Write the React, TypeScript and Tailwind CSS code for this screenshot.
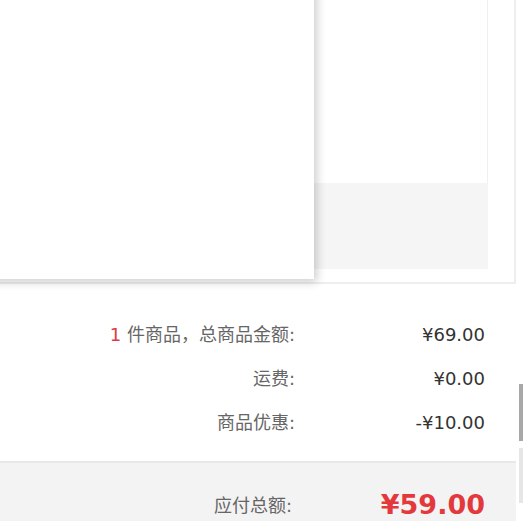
export default function App() {
  const rows = [
    { label: "件商品，总商品金额:", count: "1", value: "¥69.00" },
    { label: "运费:", value: "¥0.00" },
    { label: "商品优惠:", value: "-¥10.00" },
  ]

  return (
    <div
      className="relative w-[523px] h-[523px] overflow-hidden bg-white"
      style={{ fontFamily: '"DejaVu Sans", "Noto Sans CJK SC", sans-serif' }}
    >
      <div className="w-[516px]">
        {/* order box */}
        <div className="relative h-[284px] border-r-2 border-b-2 border-[#eeeeee] pr-[26px] pb-[13px]">
          <div className="flex h-full w-[488px] flex-col">
            <div className="h-[183px] border-r border-[#f0f0f0] bg-white"></div>
            <div className="flex-1 bg-[#f5f5f5]"></div>
          </div>
          {/* floating card */}
          <div className="absolute left-[-20px] top-[-20px] h-[299px] w-[334px] bg-white shadow-[3px_3px_9px_rgba(0,0,0,0.2)]"></div>
        </div>

        {/* summary */}
        <div className="pt-[28px] pb-[17px] pr-[31px] text-[18px]">
          {rows.map((r) => (
            <div key={r.label} className="flex h-[44px] items-center justify-end">
              <div className="text-right text-[#666666]">
                {r.count && <span className="text-[#e4393c]">{r.count} </span>}
                {r.label}
              </div>
              <div className="w-[190px] text-right text-[#333333]">{r.value}</div>
            </div>
          ))}
        </div>

        <div className="h-[60px] border-t-2 border-[#e8e8e8] bg-[#f3f3f3] pt-[27px] pr-[31px]">
          <div className="flex h-[30px] items-center justify-end">
            <div className="text-right text-[18px] text-[#666666]">应付总额:</div>
            <div className="w-[193px] text-right text-[27px] font-bold text-[#e4393c]">¥59.00</div>
          </div>
        </div>
      </div>

      {/* side scrollbar */}
      <div className="absolute right-0 top-[384px] h-[57px] w-[4px] bg-[#a8a8a8]"></div>
      <div className="absolute right-0 top-[448px] h-[55px] w-[4px] bg-[#e6e6e6]"></div>
    </div>
  )
}
